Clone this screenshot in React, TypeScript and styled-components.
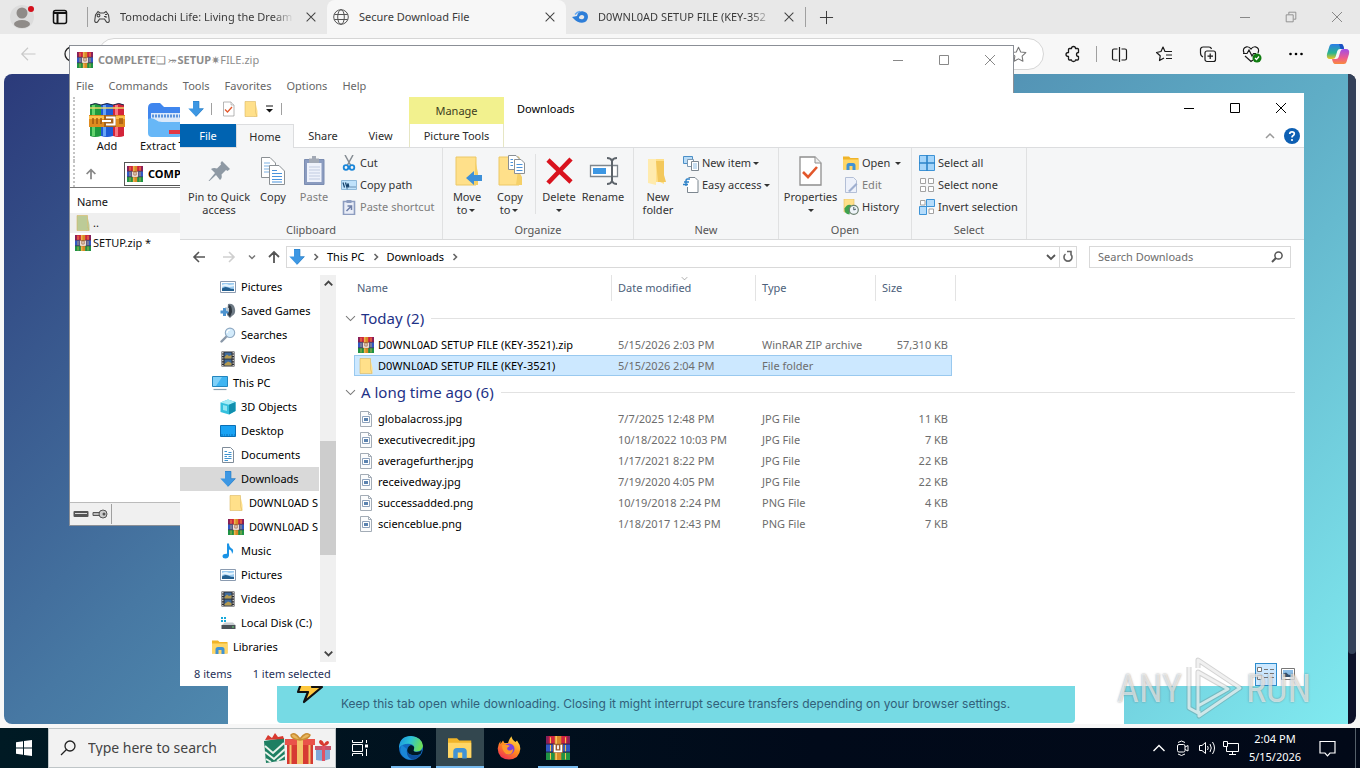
import React from "react";
import styled, { createGlobalStyle, css } from "styled-components";

const GlobalStyle = createGlobalStyle`
  * { box-sizing: border-box; }
  html, body, #root { height: 100%; }
  body {
    margin: 0;
    overflow: hidden;
    font: 11px/16px "Noto Sans", "Open Sans", sans-serif;
    color: #1b1b1b;
    background: #f7f7f7;
  }
  button, input { font: inherit; color: inherit; border: 0; padding: 0; margin: 0; background: none; }
  svg { display: block; flex: none; }
  a { color: inherit; text-decoration: none; }
`;

/* ---------- icons ---------- */

type IconProps = { size?: number; color?: string };

const Stroke = ({
  d,
  size = 16,
  color = "#1b1b1b",
  width = 1,
}: IconProps & { d: string; width?: number }) => (
  <svg width={size} height={size} viewBox="0 0 16 16" fill="none" stroke={color} strokeWidth={width}>
    <path d={d} />
  </svg>
);

const P = {
  close: "M3 3L13 13M13 3L3 13",
  min: "M3 8.5H13",
  max: "M3.5 3.5H12.5V12.5H3.5Z",
  restore: "M2.5 5.5H10.5V13.5H2.5ZM5.5 5V2.5H13.5V10.5H11",
  left: "M14 8H3M8 3L3 8L8 13",
  right: "M2 8H13M8 3L13 8L8 13",
  up: "M8 14V3M3 8L8 3L13 8",
  chevDown: "M4 6L8 10L12 6",
  chevUp: "M4 10L8 6L12 10",
  chevRight: "M6.5 5L9.5 8L6.5 11",
  plus: "M8 1V15M1 8H15",
};

const WinRar = ({ size = 16 }: IconProps) => (
  <svg width={size} height={size} viewBox="0 0 16 16">
    <path d="M0 0H16V5.4H0Z" fill="#cf2340" />
    <path d="M0 5.4H16V10.8H0Z" fill="#3157c4" />
    <path d="M0 10.8H16V16H0Z" fill="#1f9345" />
    <path d="M0 0H1.8V5H0ZM14.2 0H16V5H14.2Z" fill="#86205a" />
    <path d="M0 5.3H16M0 10.7H16" stroke="#2a2350" strokeWidth=".7" />
    <path d="M3 .8V4.8M3 6V10.2M3 11.4V15.6M13 .8V4.8M13 6V10.2M13 11.4V15.6" stroke="#f0c24a" strokeWidth=".7" />
    <path d="M5.8 0H10.2V16H5.8Z" fill="#d98a28" />
    <path d="M6.3 0H7.3V16H6.3Z" fill="#f6c860" />
    <path d="M4.6 5.2H11.4V11.2H4.6Z" fill="#9a5a30" />
    <path d="M5.8 5.8V10.2H10.2V5.8M8 6.2V8.8" stroke="#fff" strokeWidth="1.2" fill="none" />
  </svg>
);

const RarAdd = () => (
  <svg width="36" height="36" viewBox="0 0 36 36">
    <path d="M1 3Q6 0 12 3V34Q6 36 1 34Z" fill="#1f9a3e" />
    <path d="M3 3H6V34H3Z" fill="#63d36c" />
    <path d="M12 3Q18 0 24 3V34Q18 36 12 34Z" fill="#1e5bd6" />
    <path d="M14 3H17V34H14Z" fill="#67a6f6" />
    <path d="M24 3Q30 0 35 3V34Q30 36 24 34Z" fill="#d3243a" />
    <path d="M26 3H29V34H26Z" fill="#f67784" />
    <path d="M1 3Q6 0 12 3M12 3Q18 0 24 3M24 3Q30 0 35 3" stroke="#1d274a" fill="none" />
    <path d="M1 6H35" stroke="#e8d469" strokeWidth="1.4" />
    <path d="M0 13H36V25H0Z" fill="#df8b1f" />
    <path d="M0 14H36V17H0Z" fill="#fbc04d" />
    <path d="M4 16V22M8 16V22M12 16V22M31 16V22M33 16V22" stroke="#9c550e" strokeWidth="1.4" />
    <path d="M15 13H27V25H15Z" fill="#a9641c" />
    <path d="M17 15.5H25.5V22.5H17M13 19H22" fill="none" stroke="#fff" strokeWidth="2.2" />
  </svg>
);

const RarExtract = () => (
  <svg width="36" height="36" viewBox="0 0 36 36">
    <path d="M1 6Q1 1 6 1H13L17 5H32Q35 5 35 9V20H1Z" fill="#3f86ee" />
    <path d="M4 11H34V30H4Z" fill="#dbe9fa" />
    <path d="M5 14H34" stroke="#5b93dc" strokeWidth="3" strokeDasharray="2 1" />
    <path d="M1 17Q5 15 9 18Q11 20 15 20H35V32Q35 35 31 35H5Q1 35 1 31Z" fill="#67b7f7" />
    <path d="M22 28H35V32H22Z" fill="#e23844" />
  </svg>
);

const Folder = ({ size = 16, color = "#ffe08a" }: IconProps) => (
  <svg width={size} height={size} viewBox="0 0 16 16">
    <path d="M2 .5H12.5V15.5H2Z" fill={color} />
    <path d="M12.5 1.5L14.5 10V15.5H11L12.5 11Z" fill={color} />
    <path d="M2 .5H12.5V11L14 15.5H2Z" fill="none" stroke="#d9b45c" strokeOpacity=".8" strokeWidth=".7" />
  </svg>
);

const DownArrow = ({ size = 16 }: IconProps) => (
  <svg width={size} height={size} viewBox="0 0 16 16">
    <path d="M5 0H11V7.5H15.7L8 15.7L.3 7.5H5Z" fill="#3d97e3" />
    <path d="M5 .3H11V7.7H15.3L8 15.4" fill="none" stroke="#2478bf" strokeWidth=".6" />
  </svg>
);

const Picture = () => (
  <svg width="16" height="16" viewBox="0 0 16 16">
    <path d="M.5 2.5H15.5V13.5H.5Z" fill="#fff" stroke="#8b9bb0" />
    <path d="M2 4H14V12H2Z" fill="#9ccbf0" />
    <path d="M2 12V9.5Q5 7 8 8.5Q11 10 14 10V12Z" fill="#235f90" />
    <path d="M2 6Q6 4 9 6L14 5.5V7Q9 9 5 7L2 8Z" fill="#e6f4fd" />
  </svg>
);
const SavedGames = () => (
  <svg width="16" height="16" viewBox="0 0 16 16">
    <path d="M8 1Q14 0 15 6Q16 11 12 13L10 15L7 12Z" fill="#6f7b86" />
    <path d="M9 2Q12 2 12 9L10 14L7 10Z" fill="#2e3740" />
    <path d="M3 5H6V7.5H8.5V10.5H6V13H3V10.5H.5V7.5H3Z" fill="#4d93cf" />
    <path d="M5 4L9 5V9L7 8Z" fill="#b9c4cc" />
  </svg>
);
const SearchGlass = () => (
  <svg width="16" height="16" viewBox="0 0 16 16">
    <path d="M1.5 14.5L6.5 9.5" stroke="#8a98a8" strokeWidth="2.4" strokeLinecap="round" />
    <circle cx="10" cy="5.8" r="4.7" fill="#d3ebfb" stroke="#8fa9c2" strokeWidth="1.1" />
    <path d="M7 6Q7 3 10 3" stroke="#fff" fill="none" strokeWidth="1.2" />
  </svg>
);
const Videos = () => (
  <svg width="16" height="16" viewBox="0 0 16 16">
    <path d="M1.5 .5H14.5V15.5H1.5Z" fill="#2d2d30" />
    <path d="M2.8 1V15M13.2 1V15" stroke="#e8e8e8" strokeWidth="1.2" strokeDasharray="1.4 1.2" />
    <path d="M4.5 1.5H11.5V7.5H4.5ZM4.5 8.5H11.5V14.5H4.5Z" fill="#3d6a9e" />
    <path d="M4.5 6L7 3.5L9 5L11.5 4V7.5H4.5ZM4.5 13L8 10.5L11.5 12V14.5H4.5Z" fill="#b59a4e" />
  </svg>
);
const ThisPC = () => (
  <svg width="16" height="16" viewBox="0 0 16 16">
    <path d="M.5 1.5H15.5V11.5H.5Z" fill="#3fb5f2" stroke="#2385bd" />
    <path d="M1 2H10L4 11H1Z" fill="#7fd0f8" />
    <path d="M1.5 14.5H14.5" stroke="#8aa1b1" strokeWidth="1.2" />
  </svg>
);
const Cube = () => (
  <svg width="16" height="16" viewBox="0 0 16 16">
    <path d="M8 .5L15.5 3V12L9 15.5L.5 13V3.5Z" fill="#35c0dd" />
    <path d="M.5 3.5L8 .5L15.5 3L9 5.8Z" fill="#a6ecf6" />
    <path d="M9 5.8L15.5 3V12L9 15.5Z" fill="#118fae" />
    <path d="M3 6L7 7V12L3 11Z" fill="#90e6f3" />
  </svg>
);
const Desk = () => (
  <svg width="16" height="16" viewBox="0 0 16 16">
    <path d="M.5 2.5H15.5V13.5H.5Z" fill="#1aa3f4" stroke="#0a6fb5" />
    <path d="M1 12H15" stroke="#0a6fb5" strokeDasharray="2 1 1 1" />
  </svg>
);
const Doc = () => (
  <svg width="16" height="16" viewBox="0 0 16 16">
    <path d="M2.5 .5H10.5L13.5 3.5V15.5H2.5Z" fill="#fff" stroke="#7f8c99" />
    <path d="M4.5 4.5H7M8.5 5.5H11.5M4.5 7.5H11.5M4.5 9.5H7M8.5 9.5H11.5M4.5 11.5H11.5M4.5 13.5H8" stroke="#3f93cf" />
  </svg>
);
const Music = () => (
  <svg width="16" height="16" viewBox="0 0 16 16">
    <path d="M7 .5H9Q9 4 12.5 6Q14 8 12 11Q12 7 9 6.5V12.5Q8.5 15.5 5.5 15.5Q2.5 15.5 2.5 13Q3 10.5 7 10.7Z" fill="#1a93e6" />
  </svg>
);
const Disk = () => (
  <svg width="16" height="16" viewBox="0 0 16 16">
    <path d="M1 2H3V4H1ZM4 2H6V4H4ZM1 5H3V7H1ZM4 5H6V7H4Z" fill="#16a9d9" />
    <path d="M3 9L5 7.5H13L15.5 10H2Z" fill="#c6cbd0" />
    <path d="M1.5 10H15.5V14H1.5Z" fill="#4b5258" />
    <path d="M12 12H14" stroke="#6bdc74" />
  </svg>
);
const Libraries = ({ size = 16 }: IconProps) => (
  <svg width={size} height={size} viewBox="0 0 16 16">
    <path d="M0 1.5H6L7.5 3H15.5V14.5H0Z" fill="#f0b429" />
    <path d="M0 4.5H15.5V14.5H0Z" fill="#ffd666" />
    <path d="M3.5 15V10.5Q3.5 8 6 8H10Q12.5 8 12.5 10.5V15H9.5V11H6.5V15Z" fill="#4092d4" />
  </svg>
);
const ImageFile = () => (
  <svg width="16" height="16" viewBox="0 0 16 16">
    <path d="M2.5 .5H10.5L13.5 3.5V15.5H2.5Z" fill="#fbfcfd" stroke="#a3acb6" />
    <path d="M10.5 .5V3.5H13.5" fill="none" stroke="#a3acb6" />
    <path d="M4.5 5.5H11.5V11.5H4.5Z" fill="#fff" stroke="#8ea3bd" />
    <path d="M6 7H10V10H6Z" fill="#5b83b0" />
  </svg>
);
const CheckDoc = ({ size = 16 }: IconProps) => (
  <svg width={size} height={size} viewBox="0 0 32 32">
    <path d="M5 2H20L26 8V30H5Z" fill="#fff" stroke="#8f8f8f" strokeWidth="1.3" />
    <path d="M20 2V8H26" fill="#eee" stroke="#8f8f8f" />
    <path d="M8 17L13 22L22 12" fill="none" stroke="#e2572b" strokeWidth="2.6" />
  </svg>
);
const Pin = () => (
  <svg width="32" height="32" viewBox="0 0 32 32">
    <path d="M19 6L27 14L24.5 16L23 15L18.5 19.5Q19.5 23 17 25L13 20L6.5 26L5.5 26L12 18L8 14Q10.5 12.5 14 13.5L18 9.5L17.5 8Z" fill="#8e99a4" />
  </svg>
);
const CopyPages = () => (
  <svg width="32" height="32" viewBox="0 0 32 32">
    <path d="M4.5 2.5H13L18.5 8V22.5H4.5Z" fill="#fff" stroke="#8b9094" />
    <path d="M7 8H13M7 11H16M7 14H16M7 17H16" stroke="#7db1e3" />
    <path d="M12.5 10.5H22L27.5 16V29.5H12.5Z" fill="#fff" stroke="#8b9094" />
    <path d="M15 15.5H20M15 18.5H25M15 21.5H25M15 24.5H25M15 27H25" stroke="#4b93db" strokeWidth="1.2" />
  </svg>
);
const PasteBig = () => (
  <svg width="32" height="32" viewBox="0 0 32 32">
    <path d="M6.5 4.5H26V29.5H6.5Z" fill="#8b9cc0" stroke="#7a8cb1" />
    <path d="M9 8H23.5V27H9Z" fill="#eef2fb" />
    <path d="M11 3.5H21V8H11ZM14 1H18V4H14Z" fill="#a2a9b5" />
    <path d="M11 12H22M11 15H22M11 18H22M11 21H22M11 24H22" stroke="#c1cbe0" />
  </svg>
);
const Scissors = () => (
  <svg width="16" height="16" viewBox="0 0 16 16">
    <path d="M4 0L9.5 10M12 0L6.5 10" stroke="#858c93" strokeWidth="1.5" />
    <circle cx="5" cy="12.5" r="2.3" fill="none" stroke="#1a86d9" strokeWidth="1.8" />
    <circle cx="11" cy="12.5" r="2.3" fill="none" stroke="#1a86d9" strokeWidth="1.8" />
  </svg>
);
const CopyPath = () => (
  <svg width="16" height="16" viewBox="0 0 16 16">
    <path d="M.5 3.5H15.5V12.5H.5Z" fill="#bfe2fb" stroke="#8fb9d9" />
    <path d="M2 5.5L3.5 10.5M4.5 5.5L6 10.5L7 6.5L8 10.5M9.5 10H10.5M11.5 10H12.5M13.5 10H14.5" stroke="#14416b" fill="none" strokeWidth="1.2" />
  </svg>
);
const PasteShortcut = () => (
  <svg width="16" height="16" viewBox="0 0 16 16">
    <path d="M2.5 2.5H13.5V15.5H2.5Z" fill="#e9edf7" stroke="#8d9dc0" strokeWidth="1.6" />
    <path d="M5.5 1H10.5V4H5.5Z" fill="#8d9dc0" />
    <path d="M5.5 12L10 7.5M6.5 7H10.5V11" stroke="#6e7fa8" fill="none" strokeWidth="1.5" />
  </svg>
);
const MoveTo = () => (
  <svg width="32" height="32" viewBox="0 0 32 32">
    <path d="M5 2H25V30H5Z" fill="#ffe08a" stroke="#ecc867" />
    <path d="M24 4L27 18V30H22L24 24Z" fill="#f5d068" />
    <path d="M31 20V26H23V30L15 23L23 16V20Z" fill="#3d90d8" />
  </svg>
);
const CopyTo = () => (
  <svg width="32" height="32" viewBox="0 0 32 32">
    <path d="M5 2H25V30H5Z" fill="#ffe08a" stroke="#ecc867" />
    <path d="M24 15L28 22V30H22Z" fill="#f5d068" />
    <path d="M14.5 .5H22L25.5 4V14.5H14.5Z" fill="#fff" stroke="#8b9094" />
    <path d="M20.5 4.5H27L30.5 8V18.5H20.5Z" fill="#fff" stroke="#8b9094" />
    <path d="M16.5 4.5H19M16.5 7.5H19M16.5 10.5H19M22.5 9.5H28.5M22.5 12.5H28.5M22.5 15.5H28.5" stroke="#4b93db" />
  </svg>
);
const DeleteX = () => (
  <svg width="32" height="32" viewBox="0 0 32 32">
    <path d="M5 5L28 27M28 4L5 28" stroke="#d9131e" strokeWidth="4.6" />
  </svg>
);
const RenameIcon = () => (
  <svg width="32" height="32" viewBox="0 0 32 32">
    <path d="M3.5 10.5H30.5V21.5H3.5Z" fill="#fff" stroke="#7d858c" strokeWidth="1.3" />
    <path d="M6 13H19V19H6Z" fill="#3d97e3" />
    <path d="M20 3Q24 3 25 6Q26 3 30 3M25 5V27M20 29Q24 29 25 26Q26 29 30 29" fill="none" stroke="#5d646b" strokeWidth="2" />
  </svg>
);
const NewFolder = () => (
  <svg width="32" height="32" viewBox="0 0 32 32">
    <path d="M6 4H22V29L18 27H6Z" fill="#ffe08a" />
    <path d="M14 6H22V20L24 27H16Z" fill="#f3c85c" />
    <path d="M6 4H14V30L6 28Z" fill="#ffebae" />
  </svg>
);
const NewItem = () => (
  <svg width="16" height="16" viewBox="0 0 16 16">
    <path d="M.5 1.5H9.5V8.5H.5Z" fill="#b9dcf7" stroke="#4b8fc7" />
    <path d="M4.5 4.5H10.5V11.5H4.5Z" fill="#fff" stroke="#7d98b0" />
    <path d="M8.5 6.5H15.5V15.5H8.5Z" fill="#fff" stroke="#7d8790" />
    <path d="M10 9H14M10 11H14M10 13H14" stroke="#8fbbe0" />
  </svg>
);
const EasyAccess = () => (
  <svg width="16" height="16" viewBox="0 0 16 16">
    <path d="M5.5 .5H12L15 3.5V15.5H4.5V10" fill="#fff" stroke="#7d8790" />
    <path d="M0 7.5H5M7 2H4.5Q3 2 3 4V9M1 5H6" fill="none" stroke="#2e82c8" strokeWidth="1.4" />
  </svg>
);
const EditIcon = () => (
  <svg width="16" height="16" viewBox="0 0 16 16">
    <path d="M2.5 .5H10.5L13.5 3.5V15.5H2.5Z" fill="#edf1fa" stroke="#b3bfd6" />
    <path d="M5 14L13 6L14.5 7.5L7 15Z" fill="#9fafcf" />
  </svg>
);
const HistoryIcon = () => (
  <svg width="16" height="16" viewBox="0 0 16 16">
    <path d="M1 0H11V13H1Z" fill="#ffe08a" stroke="#e5c15c" strokeWidth=".6" />
    <path d="M1.5 9.5Q4 4.5 8 6L6.5 15.5Q1 15 1.5 9.5Z" fill="#3fa24e" />
    <circle cx="10.8" cy="10.8" r="4.5" fill="#eef4f8" stroke="#6a8070" strokeWidth="1.2" />
    <path d="M10.8 8V11L13 10" fill="none" stroke="#4a5a66" />
  </svg>
);
const SelectAll = () => (
  <svg width="16" height="16" viewBox="0 0 16 16">
    <path d="M.5 .5H15.5V15.5H.5Z" fill="#a5d5fa" stroke="#3d93d6" />
    <path d="M8 0V16M0 8H16" stroke="#2d84c9" strokeWidth="1.6" />
  </svg>
);
const SelectNone = () => (
  <svg width="16" height="16" viewBox="0 0 16 16">
    <path d="M1.5 1.5H6.5V6.5H1.5ZM9.5 1.5H14.5V6.5H9.5ZM1.5 9.5H6.5V14.5H1.5ZM9.5 9.5H14.5V14.5H9.5Z" fill="#fff" stroke="#a2a2a2" />
  </svg>
);
const Invert = () => (
  <svg width="16" height="16" viewBox="0 0 16 16">
    <path d="M1.5 1.5H6V6H1.5ZM10 10H14.5V14.5H10Z" fill="#fff" stroke="#a2a2a2" />
    <path d="M7.5 .5H15.5V7.5H7.5ZM.5 7.5H7.5V15.5H.5Z" fill="#b5dcfb" stroke="#3d93d6" />
  </svg>
);
const Help = () => (
  <svg width="16" height="16" viewBox="0 0 16 16">
    <circle cx="8" cy="8" r="8" fill="#0d5fb3" />
    <path d="M5.7 6Q5.8 3.8 8 3.8Q10.3 3.8 10.3 5.8Q10.3 7 8.9 7.8Q8 8.4 8 9.6" fill="none" stroke="#fff" strokeWidth="1.7" />
    <circle cx="8" cy="12" r="1.1" fill="#fff" />
  </svg>
);

/* ---------- desktop ---------- */

const Desktop = styled.div`
  position: relative;
  display: flex;
  flex-direction: column;
  height: 100vh;
  overflow: hidden;
`;
const Spacer = styled.span<{ $w?: number }>`
  flex: ${(p) => (p.$w === undefined ? "1" : `0 0 ${p.$w}px`)};
`;

/* ---------- browser ---------- */

const Browser = styled.main`
  flex: 1;
  min-height: 0;
  display: flex;
  flex-direction: column;
  background: #f7f7f7;
`;
const TabStrip = styled.div`
  display: flex;
  align-items: stretch;
  height: 34px;
  background: #e8e8e8;
`;
const StripButton = styled.button<{ $w: number }>`
  display: grid;
  place-items: center;
  flex: none;
  width: ${(p) => p.$w}px;
`;
const Divider = styled.span<{ $h: number }>`
  align-self: center;
  width: 1px;
  height: ${(p) => p.$h}px;
  background: #a0a0a0;
`;
const Tab = styled.div<{ $active?: boolean }>`
  display: flex;
  align-items: center;
  gap: 10px;
  flex: 0 1 239px;
  min-width: 0;
  padding: 0 9px 0 6px;
  color: #3b3b3b;
  ${(p) => p.$active && css`background: #f7f7f7; border-radius: 8px 8px 0 0;`}
`;
const TabTitle = styled.span<{ $fade?: boolean }>`
  flex: 1;
  overflow: hidden;
  white-space: nowrap;
  ${(p) => p.$fade && css`mask-image: linear-gradient(90deg, #000 88%, transparent);`}
`;
const Toolbar = styled.div`
  display: flex;
  align-items: center;
  height: 40px;
  padding-right: 2px;
`;
const UrlBox = styled.div`
  display: flex;
  align-items: center;
  justify-content: flex-end;
  flex: 1;
  height: 32px;
  margin: 0 7px 0 10px;
  padding-right: 16px;
  background: #fff;
  border: 1px solid #d6d6d6;
  border-radius: 16px;
`;
const PageFrame = styled.div`
  flex: 1;
  min-height: 0;
  display: flex;
  margin: 0 4px 4px;
  border-radius: 8px;
  overflow: hidden;
`;
const Page = styled.div`
  flex: 1;
  display: flex;
  justify-content: center;
  background: linear-gradient(135deg, #2b3a7a 0%, #4778a3 33%, #5fadc6 67%, #80eaf0 100%);
`;
const Card = styled.section`
  display: flex;
  flex-direction: column;
  justify-content: flex-end;
  width: 100%;
  max-width: 896px;
  margin-top: 64px;
  padding: 0 49px 1px;
  background: #fff;
`;
const Notice = styled.div`
  display: flex;
  gap: 16px;
  height: 80px;
  padding: 32px 16px 0;
  background: #76dae4;
  border-radius: 4px;
`;
const NoticeText = styled.p`
  margin: 20px 0 0;
  font: 12px/18px Inter, sans-serif;
  color: #31607a;
  white-space: nowrap;
`;
const PageScroll = styled.div`
  width: 8px;
  padding-bottom: 70px;
  background: #0c1028;
`;
const PageThumb = styled.div`
  height: 100%;
  background: #334058;
  border-radius: 0 0 4px 4px;
`;

const CloseTab = () => (
  <button aria-label="Close tab"><Stroke d={P.close} size={14} color="#444" width={1.2} /></button>
);

const BrowserWindow = () => (
  <Browser>
    <TabStrip>
      <StripButton $w={44} aria-label="Profile">
        <svg width="26" height="28" viewBox="0 0 26 28">
          <circle cx="13" cy="14" r="12" fill="#dcdcdc" />
          <circle cx="13" cy="10" r="5.5" fill="#8f8b88" />
          <ellipse cx="13" cy="21" rx="8" ry="4" fill="#8f8b88" />
          <circle cx="22" cy="6" r="3" fill="#d4101c" />
        </svg>
      </StripButton>
      <StripButton $w={32} aria-label="Tab actions">
        <svg width="16" height="16" viewBox="0 0 16 16" fill="none" stroke="#111" strokeWidth="1.5">
          <rect x="1.5" y="1.5" width="13" height="13" rx="2" />
          <path d="M1.5 4H14.5M5.5 4V14" strokeWidth="2" />
        </svg>
      </StripButton>
      <Spacer $w={11} />
      <Divider $h={20} />
      <Tab>
        <svg width="16" height="16" viewBox="0 0 16 16" fill="none" stroke="#444" strokeWidth="1.1">
          <path d="M4 2.5L1.5 6L.7 12Q1.5 14.5 3.5 13L5.5 10H10.5L12.5 13Q14.5 14.5 15.3 12L14.5 6L12 2.5L10 4H6Z" />
          <circle cx="4.5" cy="6.5" r="1.4" />
          <path d="M10 7.5H11.5M11 5.5H13M12 7V9" />
        </svg>
        <TabTitle $fade>Tomodachi Life: Living the Dream</TabTitle>
        <CloseTab />
      </Tab>
      <Tab $active>
        <svg width="16" height="16" viewBox="0 0 16 16" fill="none" stroke="#555">
          <circle cx="8" cy="8" r="7.3" />
          <ellipse cx="8" cy="8" rx="3.3" ry="7.3" />
          <path d="M1.3 5.5H14.7M1.3 10.5H14.7" />
        </svg>
        <TabTitle>Secure Download File</TabTitle>
        <CloseTab />
      </Tab>
      <Tab>
        <svg width="16" height="16" viewBox="0 0 16 16">
          <path fillRule="evenodd" d="M0 8L5 7Q6 2 10.5 2.2Q16 3 16 8Q15.5 13.5 10 13.8Q5 13.5 2.5 10.5L0 8ZM7 9.2Q8.5 10.5 10.5 10.2Q12.5 9.5 12.3 7.8Q11.8 6 9.8 6.1Q8 6.3 7 8Z" fill="#2e7ed8" />
          <path d="M3 5.5Q5 3 8 2.5" stroke="#64a6f0" strokeWidth="1.3" fill="none" />
        </svg>
        <TabTitle $fade>D0WNL0AD SETUP FILE (KEY-352</TabTitle>
        <CloseTab />
      </Tab>
      <Divider $h={20} />
      <StripButton $w={41} aria-label="New tab"><Stroke d={P.plus} size={15} color="#333" /></StripButton>
      <Spacer />
      <StripButton $w={46} aria-label="Minimize"><Stroke d={P.min} color="#888" /></StripButton>
      <StripButton $w={46} aria-label="Restore"><Stroke d={P.restore} size={14} color="#888" /></StripButton>
      <StripButton $w={46} aria-label="Close"><Stroke d={P.close} color="#888" /></StripButton>
    </TabStrip>
    <Toolbar>
      <StripButton $w={56} aria-label="Back"><Stroke d={P.left} size={20} color="#c8c8c8" width={0.9} /></StripButton>
      <StripButton $w={32} aria-label="Refresh">
        <svg width="20" height="20" viewBox="0 0 20 20" fill="none" stroke="#222" strokeWidth="1.3"><circle cx="10" cy="10" r="7" /></svg>
      </StripButton>
      <UrlBox>
        <svg width="17" height="17" viewBox="0 0 16 16" fill="none" stroke="#777" strokeLinejoin="round">
          <path d="M8 1.2L10.1 5.6L14.9 6.2L11.4 9.6L12.2 14.4L8 12.1L3.8 14.4L4.6 9.6L1.1 6.2L5.9 5.6Z" />
        </svg>
      </UrlBox>
      <StripButton $w={44} aria-label="Extensions">
        <svg width="18" height="18" viewBox="0 0 18 18" fill="none" stroke="#1b1b1b" strokeWidth="1.3" strokeLinejoin="round">
          <path d="M5.5 3.5H7.5Q7.5 1.5 9.5 1.5T11.5 3.5H13.5Q14.5 3.5 14.5 4.5V7.5Q12.5 7.5 12.5 9.5T14.5 11.5V14Q14.5 15 13.5 15H11.5Q11.5 16.5 9.5 16.5T7.5 15H5.5Q4.5 15 4.5 14V11.5Q2 11.5 2 9.5T4.5 7.5V4.5Q4.5 3.5 5.5 3.5Z" />
        </svg>
      </StripButton>
      <Spacer $w={1} />
      <Divider $h={16} />
      <StripButton $w={45} aria-label="Split screen">
        <svg width="17" height="17" viewBox="0 0 17 17" fill="none" stroke="#1b1b1b" strokeWidth="1.2">
          <path d="M6.5 3H3Q1.5 3 1.5 4.5V12.5Q1.5 14 3 14H6.5M10.5 3H14Q15.5 3 15.5 4.5V12.5Q15.5 14 14 14H10.5M8.5 1V16" />
        </svg>
      </StripButton>
      <StripButton $w={44} aria-label="Favorites">
        <svg width="18" height="18" viewBox="0 0 18 18" fill="none" stroke="#1b1b1b" strokeWidth="1.2" strokeLinejoin="round">
          <path d="M9 13L4.5 15.5L5.2 10.8L1.5 7.5L6 6.5L8 2L10 6.5H17M11 10H17M11 13.5H17" />
        </svg>
      </StripButton>
      <StripButton $w={44} aria-label="Collections">
        <svg width="18" height="18" viewBox="0 0 18 18" fill="none" stroke="#1b1b1b" strokeWidth="1.2">
          <path d="M4 12Q1.5 11 1.5 8V4Q2 2 4 2H10Q12 2 12.5 4" />
          <rect x="6" y="6" width="10.5" height="10.5" rx="2" />
          <path d="M11.2 8.5V14M8.5 11.2H14" />
        </svg>
      </StripButton>
      <StripButton $w={44} aria-label="Browser essentials">
        <svg width="20" height="18" viewBox="0 0 20 18" fill="none" stroke="#1b1b1b" strokeWidth="1.2">
          <path d="M2 8Q0 3 4.5 1.8Q7.5 1.5 9 4Q10.5 1.5 13.5 1.8Q18 3 16 8M3 11L9 16.5L11 15M1 8.5H5L7 5L10 11L11.5 8.5H14" />
          <circle cx="15" cy="13" r="4.5" fill="#107c10" stroke="none" />
          <path d="M13 13L14.5 14.5L17 11.5" stroke="#fff" />
        </svg>
      </StripButton>
      <StripButton $w={44} aria-label="Settings and more">
        <svg width="16" height="16" viewBox="0 0 16 16"><circle cx="2.5" cy="8" r="1.3" /><circle cx="8" cy="8" r="1.3" /><circle cx="13.5" cy="8" r="1.3" /></svg>
      </StripButton>
      <StripButton $w={40} aria-label="Copilot">
        <svg width="24" height="22" viewBox="0 0 24 22">
          <defs>
            <linearGradient id="cpA" x1="0" y1="0" x2="0" y2="1"><stop offset="0" stopColor="#2b7de9" /><stop offset=".6" stopColor="#29b58f" /><stop offset="1" stopColor="#f2c51d" /></linearGradient>
            <linearGradient id="cpB" x1="0" y1="0" x2="0" y2="1"><stop offset="0" stopColor="#a04ce8" /><stop offset=".6" stopColor="#ee5b8f" /><stop offset="1" stopColor="#f98a3c" /></linearGradient>
          </defs>
          <path d="M6 1H15Q17 1 18 6H14Q12 6 11.3 8L9.5 14Q9 16 6 16H4Q0 16 1 11L3.5 3Q4 1 6 1Z" fill="url(#cpA)" />
          <path d="M18 21H9Q7 21 6 16H10Q12 16 12.7 14L14.5 8Q15 6 18 6H20Q24 6 23 11L20.5 19Q20 21 18 21Z" fill="url(#cpB)" />
          <path d="M13 1H15.5Q17.5 1 18 6H14.5Z" fill="#1a52c4" />
        </svg>
      </StripButton>
    </Toolbar>
    <PageFrame>
      <Page>
        <Card>
          <Notice>
            <svg width="32" height="32" viewBox="0 0 32 32">
              <path d="M10 3H26L19 12H29L11 27L15 17H5Z" fill="#ffc83d" stroke="#111" strokeWidth="2.2" strokeLinejoin="round" />
            </svg>
            <NoticeText>
              Keep this tab open while downloading. Closing it might interrupt secure transfers depending on your browser settings.
            </NoticeText>
          </Notice>
        </Card>
      </Page>
      <PageScroll><PageThumb /></PageScroll>
    </PageFrame>
  </Browser>
);

/* ---------- archive window ---------- */

const Window = styled.section<{ $top: number; $left: number; $right: number; $bottom: number }>`
  position: absolute;
  top: ${(p) => p.$top}px;
  left: ${(p) => p.$left}px;
  right: ${(p) => p.$right}px;
  bottom: ${(p) => p.$bottom}px;
  display: flex;
  flex-direction: column;
  overflow: hidden;
  background: #fff;
`;
const RarWindow = styled(Window)`
  border: 1px solid #8b8f96;
  color: #666;
`;
const RarTitle = styled.header`
  display: flex;
  align-items: center;
  height: 28px;
  padding-left: 7px;
  gap: 5px;
  color: #8c8c8c;
  white-space: nowrap;
`;
const WinControls = styled.div`
  display: flex;
  margin-left: auto;
  height: 30px;
`;
const MenuBar = styled.nav`
  display: flex;
  align-items: center;
  gap: 15px;
  height: 23px;
  padding-left: 6px;
`;
const RarTools = styled.div`
  display: flex;
  height: 64px;
  margin-left: 3px;
  padding: 5px 0 0 11px;
  gap: 12px;
  border-left: 2px dotted #c4c4c4;
  color: #111;
`;
const RarTool = styled.button`
  display: flex;
  flex-direction: column;
  align-items: center;
  min-width: 42px;
  white-space: nowrap;
`;
const RarPath = styled.div`
  display: flex;
  align-items: center;
  height: 26px;
  margin-left: 3px;
  padding-left: 9px;
  border-left: 2px dotted #c4c4c4;
`;
const PathBox = styled.div`
  display: flex;
  align-items: center;
  gap: 5px;
  flex: 1;
  height: 24px;
  margin-left: 8px;
  padding-left: 2px;
  border: 1px solid #555;
  font-weight: bold;
  color: #000;
`;
const RarList = styled.div`
  flex: 1;
  border-top: 1px solid #777;
  padding-top: 2px;
  color: #111;
`;
const RarRow = styled.div<{ $shade?: boolean; $head?: boolean }>`
  display: flex;
  align-items: center;
  gap: 2px;
  height: ${(p) => (p.$head ? 23 : 20)}px;
  padding-left: ${(p) => (p.$head ? 7 : 5)}px;
  background: ${(p) => (p.$shade ? "#efefef" : "#fff")};
`;
const RarStatus = styled.footer`
  display: flex;
  align-items: center;
  gap: 3px;
  height: 23px;
  padding-left: 3px;
  background: #f0f0f0;
  border-top: 1px solid #bbb;
`;

const ArchiveWindow = () => (
  <RarWindow $top={45} $left={69} $right={346} $bottom={242}>
    <RarTitle>
      <WinRar />
      <span><b>COMPLETE</b>❏ ⤖<b>SETUP</b>✷FILE.zip</span>
      <WinControls>
        <StripButton $w={46} aria-label="Minimize"><Stroke d={P.min} color="#888" /></StripButton>
        <StripButton $w={46} aria-label="Maximize"><Stroke d={P.max} color="#888" /></StripButton>
        <StripButton $w={46} aria-label="Close"><Stroke d={P.close} color="#888" /></StripButton>
      </WinControls>
    </RarTitle>
    <MenuBar>
      {["File", "Commands", "Tools", "Favorites", "Options", "Help"].map((m) => <button key={m}>{m}</button>)}
    </MenuBar>
    <RarTools>
      <RarTool><RarAdd />Add</RarTool>
      <RarTool><RarExtract />Extract To</RarTool>
    </RarTools>
    <RarPath>
      <button aria-label="Up one level"><Stroke d={P.up} size={14} color="#888" width={2} /></button>
      <Spacer $w={18} />
      <PathBox><WinRar />COMPLETE</PathBox>
    </RarPath>
    <RarList>
      <RarRow $head>Name</RarRow>
      <RarRow $shade><Folder color="#bccb97" />..</RarRow>
      <RarRow><WinRar />SETUP.zip *</RarRow>
    </RarList>
    <RarStatus>
      <svg width="16" height="8" viewBox="0 0 16 8"><rect x=".5" y="1" width="15" height="6" rx="1" fill="#555" /><path d="M2 3.5H14" stroke="#ddd" /></svg>
      <svg width="16" height="10" viewBox="0 0 16 10"><path d="M1 3.5H9V6.5H1Z" fill="#bbb" stroke="#555" /><circle cx="11" cy="5" r="4" fill="#ccc" stroke="#555" /><circle cx="12" cy="5" r="1.5" fill="#555" /></svg>
      <Divider $h={20} />
    </RarStatus>
  </RarWindow>
);

/* ---------- explorer window ---------- */

const TopBar = styled.header`
  display: flex;
  align-items: stretch;
  height: 31px;
`;
const QuickAccess = styled.div`
  display: flex;
  align-items: center;
  gap: 7px;
  width: 229px;
  padding-left: 8px;
`;
const QuickTools = styled.div`
  display: flex;
  align-items: center;
  gap: 6px;
  padding-left: 2px;
`;
const ContextTab = styled.span`
  display: grid;
  place-items: center;
  align-self: flex-end;
  width: 95px;
  height: 27px;
  background: #f2f18e;
  color: #3d3d20;
`;
const WinTitle = styled.h1`
  margin: 0 0 0 13px;
  font-size: 11px;
  font-weight: normal;
  line-height: 31px;
  color: #000;
`;
const RibbonTabs = styled.nav`
  display: flex;
  height: 24px;
  border-bottom: 1px solid #dcdddf;
`;
const RibbonTab = styled.button<{ $w: number; $kind?: "file" | "active" | "context" }>`
  width: ${(p) => p.$w}px;
  color: #2b2b2b;
  ${(p) => p.$kind === "file" && css`background: #0063b1; color: #fff;`}
  ${(p) => p.$kind === "active" && css`
    margin-bottom: -1px;
    background: #f5f6f7;
    border: 1px solid #dcdddf;
    border-bottom: 0;
  `}
  ${(p) => p.$kind === "context" && css`
    border: solid #e6e6c4;
    border-width: 0 1px;
  `}
`;
const RibbonEnd = styled.div`
  display: flex;
  align-items: center;
  gap: 6px;
  margin-left: auto;
  padding-right: 4px;
`;
const Ribbon = styled.div`
  display: flex;
  height: 92px;
  background: #f5f6f7;
  border-bottom: 1px solid #d9dadb;
`;
const Group = styled.section<{ $w: number }>`
  display: flex;
  flex-direction: column;
  justify-content: space-between;
  width: ${(p) => p.$w}px;
  padding: 4px 3px 0;
  border-right: 1px solid #e0e1e2;
`;
const GroupBody = styled.div`
  display: flex;
`;
const GroupLabel = styled.span`
  text-align: center;
  line-height: 18px;
  color: #555;
`;
const Big = styled.button<{ $w: number; $off?: boolean }>`
  display: flex;
  flex-direction: column;
  align-items: center;
  flex: none;
  width: ${(p) => p.$w}px;
  padding-top: 3px;
  line-height: 13px;
  color: ${(p) => (p.$off ? "#7d7d7d" : "#333")};
`;
const BigLabel = styled.span`
  padding-top: 3px;
  white-space: pre;
`;
const SmallCol = styled.div`
  display: flex;
  flex-direction: column;
  padding-left: 4px;
`;
const Small = styled.button<{ $off?: boolean }>`
  display: flex;
  align-items: center;
  gap: 3px;
  height: 22px;
  white-space: nowrap;
  color: ${(p) => (p.$off ? "#7d7d7d" : "#333")};
`;
const Caret = styled.span`
  display: inline-block;
  margin: 0 2px 2px;
  border: 3px solid transparent;
  border-top-color: #333;
  border-bottom: 0;
`;
const GroupRule = styled.span`
  width: 1px;
  height: 60px;
  margin: 2px 3px 0;
  background: #e0e1e2;
`;

const AddressRow = styled.div`
  display: flex;
  align-items: center;
  height: 34px;
  padding: 0 13px 0 7px;
`;
const NavButton = styled.button<{ $w?: number }>`
  display: grid;
  place-items: center;
  width: ${(p) => p.$w ?? 24}px;
`;
const Crumbs = styled.div`
  display: flex;
  align-items: center;
  flex: 1;
  height: 22px;
  padding-left: 2px;
  border: 1px solid #d9d9d9;
  margin: 0 12px 0 1px;
`;
const CrumbList = styled.nav`
  display: flex;
  align-items: center;
  flex: 1;
  gap: 3px;
  color: #000;
`;
const Refresh = styled.button`
  display: grid;
  place-items: center;
  width: 17px;
  height: 20px;
  border-left: 1px solid #d9d9d9;
`;
const SearchBox = styled.label`
  display: flex;
  align-items: center;
  width: 202px;
  height: 22px;
  padding: 0 6px 0 8px;
  border: 1px solid #d9d9d9;
  input {
    flex: 1;
    min-width: 0;
    outline: 0;
  }
  input::placeholder { color: #6d6d6d; opacity: 1; }
`;

const Body = styled.div`
  display: flex;
  flex: 1;
  min-height: 0;
`;
const TreePane = styled.nav`
  display: flex;
  width: 156px;
  padding-top: 1px;
`;
const TreeList = styled.ul`
  flex: 1;
  min-width: 0;
  margin: 0;
  padding: 0;
  list-style: none;
  overflow: hidden;
`;
const TreeItem = styled.li<{ $level: number; $on?: boolean }>`
  height: 24px;
  margin-right: 1px;
  padding-left: ${(p) => 24 + p.$level * 8}px;
  background: ${(p) => (p.$on ? "#d9d9d9" : "transparent")};
  a {
    display: flex;
    align-items: center;
    gap: 5px;
    height: 24px;
    white-space: nowrap;
    color: #000;
  }
`;
const Scroll = styled.div`
  display: flex;
  flex-direction: column;
  width: 16px;
  background: #f0f0f0;
`;
const ScrollButton = styled.button`
  display: grid;
  place-items: center;
  height: 17px;
`;
const Track = styled.div`
  flex: 1;
  display: flex;
  flex-direction: column;
`;
const Before = styled.div`
  flex: 149;
`;
const Thumb = styled.div`
  flex: 113;
  background: #cdcdcd;
`;
const After = styled.div`
  flex: 90;
`;

const FilePane = styled.div`
  flex: 1;
  padding: 1px 9px 0 7px;
`;
const Files = styled.table`
  width: 100%;
  table-layout: fixed;
  border-collapse: collapse;
  th, td { padding: 0; font-weight: normal; text-align: left; white-space: nowrap; }
`;
const HeadCell = styled.th<{ $first?: boolean; $sorted?: boolean; $bare?: boolean }>`
  height: 27px;
  vertical-align: top;
  color: #4c607a;
  span {
    display: block;
    line-height: 26px;
    padding-left: ${(p) => (p.$first ? 3 : 6)}px;
    border-right: ${(p) => (p.$bare ? 0 : 1)}px solid #e3e3e3;
  }
  ${(p) => p.$sorted && css`
    position: relative;
    svg { position: absolute; top: -2px; left: 50%; margin-left: -5px; }
  `}
`;
const EndCell = styled.th`
  vertical-align: top;
  span { display: block; width: 4px; height: 26px; border-right: 1px solid #e3e3e3; }
`;
const GroupCell = styled.td`
  height: 32px;
`;
const GroupHead = styled.div`
  display: flex;
  align-items: center;
  gap: 4px;
  font-size: 15px;
  line-height: 20px;
  color: #1e3287;
  svg { margin-left: 1px; }
  &::after { content: ""; flex: 1; height: 1px; margin-left: 3px; background: #e2e2e2; }
`;
const Row = styled.tr<{ $on?: boolean }>`
  height: 21px;
  color: #6d6d6d;
  ${(p) => p.$on && css`
    td:not(:first-child):not(:last-child) { background: #cce8ff; box-shadow: inset 0 1px #99c9ef, inset 0 -1px #99c9ef; }
    && td:nth-child(2) { box-shadow: inset 1px 1px #99c9ef, inset 0 -1px #99c9ef; }
    && td:nth-child(5) { box-shadow: inset -1px 1px #99c9ef, inset 0 -1px #99c9ef; }
  `}
`;
const Cell = styled.td<{ $right?: boolean }>`
  && { padding: ${(p) => (p.$right ? "0 4px 0 0" : "0 0 0 6px")}; text-align: ${(p) => (p.$right ? "right" : "left")}; }
`;
const FileName = styled.div`
  display: flex;
  align-items: center;
  gap: 4px;
  padding-left: 4px;
  color: #000;
`;
const StatusBar = styled.footer`
  display: flex;
  align-items: center;
  gap: 21px;
  height: 24px;
  padding: 0 5px 0 14px;
  color: #1f3058;
`;
const ViewButton = styled.button<{ $on?: boolean }>`
  display: grid;
  place-items: center;
  width: 22px;
  height: 23px;
  ${(p) => p.$on && css`background: #cce8ff; border: 1px solid #2d8ccd;`}
`;
const Views = styled.div`
  display: flex;
  margin-left: auto;
`;

type FileEntry = { name: string; date: string; type: string; size: string; icon: React.ReactNode; on?: boolean };
const today: FileEntry[] = [
  { name: "D0WNL0AD SETUP FILE (KEY-3521).zip", date: "5/15/2026 2:03 PM", type: "WinRAR ZIP archive", size: "57,310 KB", icon: <WinRar /> },
  { name: "D0WNL0AD SETUP FILE (KEY-3521)", date: "5/15/2026 2:04 PM", type: "File folder", size: "", icon: <Folder />, on: true },
];
const older: FileEntry[] = [
  { name: "globalacross.jpg", date: "7/7/2025 12:48 PM", type: "JPG File", size: "11 KB", icon: <ImageFile /> },
  { name: "executivecredit.jpg", date: "10/18/2022 10:03 PM", type: "JPG File", size: "7 KB", icon: <ImageFile /> },
  { name: "averagefurther.jpg", date: "1/17/2021 8:22 PM", type: "JPG File", size: "22 KB", icon: <ImageFile /> },
  { name: "receivedway.jpg", date: "7/19/2020 4:05 PM", type: "JPG File", size: "22 KB", icon: <ImageFile /> },
  { name: "successadded.png", date: "10/19/2018 2:24 PM", type: "PNG File", size: "4 KB", icon: <ImageFile /> },
  { name: "scienceblue.png", date: "1/18/2017 12:43 PM", type: "PNG File", size: "7 KB", icon: <ImageFile /> },
];

const FileGroup = ({ title, files }: { title: string; files: FileEntry[] }) => (
  <tbody>
    <tr>
      <GroupCell colSpan={6}>
        <GroupHead><Stroke d="M2.5 5L8 10.5L13.5 5" size={13} color="#7a7a7a" width={1.3} />{title}</GroupHead>
      </GroupCell>
    </tr>
    {files.map((f) => (
      <Row key={f.name} $on={f.on}>
        <td />
        <td><FileName>{f.icon}{f.name}</FileName></td>
        <Cell>{f.date}</Cell>
        <Cell>{f.type}</Cell>
        <Cell $right>{f.size}</Cell>
        <td />
      </Row>
    ))}
  </tbody>
);

const tree: { label: string; icon: React.ReactNode; level: number; on?: boolean }[] = [
  { label: "Pictures", icon: <Picture />, level: 2 },
  { label: "Saved Games", icon: <SavedGames />, level: 2 },
  { label: "Searches", icon: <SearchGlass />, level: 2 },
  { label: "Videos", icon: <Videos />, level: 2 },
  { label: "This PC", icon: <ThisPC />, level: 1 },
  { label: "3D Objects", icon: <Cube />, level: 2 },
  { label: "Desktop", icon: <Desk />, level: 2 },
  { label: "Documents", icon: <Doc />, level: 2 },
  { label: "Downloads", icon: <DownArrow />, level: 2, on: true },
  { label: "D0WNL0AD S", icon: <Folder />, level: 3 },
  { label: "D0WNL0AD S", icon: <WinRar />, level: 3 },
  { label: "Music", icon: <Music />, level: 2 },
  { label: "Pictures", icon: <Picture />, level: 2 },
  { label: "Videos", icon: <Videos />, level: 2 },
  { label: "Local Disk (C:)", icon: <Disk />, level: 2 },
  { label: "Libraries", icon: <Libraries />, level: 1 },
];

const ExplorerWindow = () => (
  <Window $top={93} $left={180} $right={56} $bottom={82}>
    <TopBar>
      <QuickAccess>
        <DownArrow />
        <Divider $h={12} />
        <QuickTools>
          <CheckDoc />
          <Folder />
          <svg width="9" height="8" viewBox="0 0 9 8"><path d="M1 1H8" stroke="#111" /><path d="M1 4H8L4.5 7.5Z" fill="#111" /></svg>
        </QuickTools>
        <Divider $h={12} />
      </QuickAccess>
      <ContextTab>Manage</ContextTab>
      <WinTitle>Downloads</WinTitle>
      <WinControls>
        <StripButton $w={46} aria-label="Minimize"><Stroke d={P.min} color="#000" /></StripButton>
        <StripButton $w={46} aria-label="Maximize"><Stroke d={P.max} color="#000" /></StripButton>
        <StripButton $w={46} aria-label="Close"><Stroke d={P.close} color="#000" /></StripButton>
      </WinControls>
    </TopBar>
    <RibbonTabs>
      <RibbonTab $w={56} $kind="file">File</RibbonTab>
      <RibbonTab $w={58} $kind="active">Home</RibbonTab>
      <RibbonTab $w={58}>Share</RibbonTab>
      <RibbonTab $w={57}>View</RibbonTab>
      <RibbonTab $w={95} $kind="context">Picture Tools</RibbonTab>
      <RibbonEnd>
        <button aria-label="Collapse ribbon"><Stroke d={P.chevUp} color="#999" width={1.5} /></button>
        <button aria-label="Help"><Help /></button>
      </RibbonEnd>
    </RibbonTabs>
    <Ribbon>
      <Group $w={263}>
        <GroupBody>
          <Big $w={72}><Pin /><BigLabel>{"Pin to Quick\naccess"}</BigLabel></Big>
          <Big $w={36}><CopyPages /><BigLabel>Copy</BigLabel></Big>
          <Big $w={46} $off><PasteBig /><BigLabel>Paste</BigLabel></Big>
          <SmallCol>
            <Small><Scissors />Cut</Small>
            <Small><CopyPath />Copy path</Small>
            <Small $off><PasteShortcut />Paste shortcut</Small>
          </SmallCol>
        </GroupBody>
        <GroupLabel>Clipboard</GroupLabel>
      </Group>
      <Group $w={191}>
        <GroupBody>
          <Big $w={42}><MoveTo /><BigLabel>{"Move\nto"}<Caret /></BigLabel></Big>
          <Big $w={44}><CopyTo /><BigLabel>{"Copy\nto"}<Caret /></BigLabel></Big>
          <GroupRule />
          <Big $w={40}><DeleteX /><BigLabel>{"Delete\n"}<Caret /></BigLabel></Big>
          <Big $w={48}><RenameIcon /><BigLabel>Rename</BigLabel></Big>
        </GroupBody>
        <GroupLabel>Organize</GroupLabel>
      </Group>
      <Group $w={145}>
        <GroupBody>
          <Big $w={42}><NewFolder /><BigLabel>{"New\nfolder"}</BigLabel></Big>
          <SmallCol>
            <Small><NewItem /><span>New item<Caret /></span></Small>
            <Small><EasyAccess /><span>Easy access<Caret /></span></Small>
          </SmallCol>
        </GroupBody>
        <GroupLabel>New</GroupLabel>
      </Group>
      <Group $w={133}>
        <GroupBody>
          <Big $w={57}><CheckDoc size={32} /><BigLabel>{"Properties\n"}<Caret /></BigLabel></Big>
          <SmallCol>
            <Small><Libraries /><span>Open <Caret /></span></Small>
            <Small $off><EditIcon />Edit</Small>
            <Small><HistoryIcon />History</Small>
          </SmallCol>
        </GroupBody>
        <GroupLabel>Open</GroupLabel>
      </Group>
      <Group $w={115}>
        <GroupBody>
          <SmallCol>
            <Small><SelectAll />Select all</Small>
            <Small><SelectNone />Select none</Small>
            <Small><Invert />Invert selection</Small>
          </SmallCol>
        </GroupBody>
        <GroupLabel>Select</GroupLabel>
      </Group>
    </Ribbon>
    <AddressRow>
      <NavButton aria-label="Back"><Stroke d={P.left} color="#555" width={1.6} /></NavButton>
      <Spacer $w={6} />
      <NavButton aria-label="Forward"><Stroke d={P.right} color="#cfcfcf" width={1.6} /></NavButton>
      <NavButton $w={22} aria-label="Recent locations"><Stroke d={P.chevDown} size={12} color="#777" width={2} /></NavButton>
      <NavButton $w={22} aria-label="Up"><Stroke d={P.up} color="#555" width={1.8} /></NavButton>
      <Crumbs>
        <CrumbList>
          <DownArrow />
          <Stroke d={P.chevRight} color="#666" width={1.6} />
          <a href="#this-pc">This PC</a>
          <Stroke d={P.chevRight} color="#666" width={1.6} />
          <a href="#downloads">Downloads</a>
          <Stroke d={P.chevRight} color="#666" width={1.6} />
        </CrumbList>
        <button aria-label="Previous locations"><Stroke d={P.chevDown} color="#555" width={1.8} /></button>
        <Refresh aria-label="Refresh">
          <svg width="12" height="14" viewBox="0 0 12 14" fill="none" stroke="#666" strokeWidth="1.6"><path d="M3.5 4A4 4 0 1 0 8.5 4M5 1.5H9V5.5" /></svg>
        </Refresh>
      </Crumbs>
      <SearchBox>
        <input aria-label="Search Downloads" placeholder="Search Downloads" />
        <svg width="14" height="14" viewBox="0 0 14 14" fill="none" stroke="#555"><circle cx="8.5" cy="5.5" r="3.6" strokeWidth="1.5" /><path d="M6 8L2 12" strokeWidth="2" /></svg>
      </SearchBox>
    </AddressRow>
    <Body>
      <TreePane>
        <TreeList>
          {tree.map((t, i) => (
            <TreeItem key={i} $level={t.level} $on={t.on}><a href="#tree">{t.icon}{t.label}</a></TreeItem>
          ))}
        </TreeList>
        <Scroll>
          <ScrollButton aria-label="Scroll up"><Stroke d={P.chevUp} size={15} color="#444" width={2} /></ScrollButton>
          <Track><Before /><Thumb /><After /></Track>
          <ScrollButton aria-label="Scroll down"><Stroke d={P.chevDown} size={15} color="#444" width={2} /></ScrollButton>
        </Scroll>
      </TreePane>
      <FilePane>
        <Files>
          <colgroup>
            <col width={11} /><col width={258} /><col width={144} /><col width={120} /><col width={76} /><col />
          </colgroup>
          <thead>
            <tr>
              <th />
              <HeadCell $first><span>Name</span></HeadCell>
              <HeadCell $sorted><Stroke d={P.chevDown} size={11} color="#888" /><span>Date modified</span></HeadCell>
              <HeadCell><span>Type</span></HeadCell>
              <HeadCell $bare><span>Size</span></HeadCell>
              <EndCell><span /></EndCell>
            </tr>
          </thead>
          <FileGroup title="Today (2)" files={today} />
          <FileGroup title="A long time ago (6)" files={older} />
        </Files>
      </FilePane>
    </Body>
    <StatusBar>
      <span>8 items</span>
      <span>1 item selected</span>
      <Views>
        <ViewButton $on aria-label="Details view">
          <svg width="18" height="16" viewBox="0 0 18 16" fill="none" stroke="#777"><path d="M.5 1.5H4.5V5.5H.5ZM.5 9.5H4.5V13.5H.5Z" fill="#fff" /><path d="M7 3.5H11M13 3.5H17M7 7.5H11M13 7.5H17M7 11.5H11M13 11.5H17" /></svg>
        </ViewButton>
        <ViewButton aria-label="Large icons view">
          <svg width="14" height="12" viewBox="0 0 14 12"><path d="M.5 .5H13.5V11.5H.5Z" fill="#fff" stroke="#777" /><path d="M2 2H12V8H2Z" fill="#8bbde6" /><path d="M2 9V6L5 4.5L8 7L12 6V9Z" fill="#34506b" /></svg>
        </ViewButton>
      </Views>
    </StatusBar>
  </Window>
);

/* ---------- watermark ---------- */

const Watermark = styled.div`
  position: absolute;
  right: 49px;
  bottom: 44px;
  display: flex;
  align-items: center;
  gap: 2px;
  height: 70px;
  font: 38px/66px "Roboto Condensed", "Open Sans Condensed", "Noto Sans Condensed", Roboto, sans-serif;
  color: rgba(255, 255, 255, 0.65);
  text-shadow: 0 0 2px rgba(90, 90, 90, 0.6);
  pointer-events: none;
`;
const Brand = () => (
  <Watermark>
    ANY
    <svg width="60" height="66" viewBox="0 0 60 66" fill="none" strokeLinejoin="round">
      <path d="M5 11V52L14 57V16L44 33L14 50M14 12V4L56 32L15 60V55" stroke="rgba(110,110,110,.3)" strokeWidth="5" />
      <path d="M5 11V52L14 57V16L44 33L14 50M14 12V4L56 32L15 60V55" stroke="rgba(255,255,255,.65)" strokeWidth="3" />
    </svg>
    RUN
  </Watermark>
);

/* ---------- taskbar ---------- */

const Bar = styled.footer`
  display: flex;
  height: 40px;
  background: linear-gradient(90deg, #001a24, #010a1a 60%, #020918);
  color: #fff;
`;
const TaskSearch = styled.label`
  display: flex;
  align-items: center;
  width: 288px;
  padding: 0 4px 0 11px;
  gap: 12px;
  background: #f2f2f2;
  border: 1px solid #bfc5c7;
  input { flex: 1; min-width: 0; font-size: 14px; outline: 0; }
  input::placeholder { color: #444; opacity: 1; }
`;
const TaskButton = styled.button<{ $on?: boolean; $open?: boolean }>`
  display: grid;
  place-items: center;
  width: 48px;
  margin-right: 1px;
  background: ${(p) => (p.$on ? "#33474f" : "transparent")};
  ${(p) => p.$open && css`
    background-image: linear-gradient(#76b9ed, #76b9ed);
    background-size: ${p.$on ? 48 : 40}px 2px;
    background-position: bottom center;
    background-repeat: no-repeat;
  `}
`;
const TrayButton = styled.button<{ $w: number }>`
  display: grid;
  place-items: center;
  width: ${(p) => p.$w}px;
  line-height: 18px;
  color: #fff;
`;
const PeekDesktop = styled.button`
  width: 5px;
  margin-left: 8px;
  border-left: 1px solid #55606a;
`;

const Taskbar = () => (
  <Bar>
    <StripButton $w={48} aria-label="Start">
      <svg width="16" height="16" viewBox="0 0 16 16"><path d="M0 2.2L7 1.2V7.5H0ZM8 1L16 0V7.5H8ZM0 8.5H7V14.8L0 13.8ZM8 8.5H16V16L8 15Z" fill="#fff" /></svg>
    </StripButton>
    <TaskSearch>
      <svg width="16" height="16" viewBox="0 0 16 16" fill="none" stroke="#222" strokeWidth="1.3"><circle cx="10" cy="6" r="5" /><path d="M6.5 9.5L1 15" /></svg>
      <input aria-label="Type here to search" placeholder="Type here to search" />
      <svg width="68" height="34" viewBox="0 0 68 34">
        <path d="M1 10L21 7L22 29L3 32Z" fill="#1e7f62" />
        <path d="M2 15L10 22L21 12M2 21L11 28L22 18M3 28L8 31M14 30L22 24" stroke="#e9f3ea" strokeWidth="2" fill="none" />
        <path d="M2 9L5 4L9 7L12 2L15 6L20 5L21 8Z" fill="#d8392f" />
        <path d="M24 11H50V33H24Z" fill="#d63a33" />
        <path d="M22 8H52V14H22Z" fill="#e9524a" />
        <path d="M34 8H40V33H34Z" fill="#f3c26b" />
        <path d="M27.5 14V33M46.5 14V33" stroke="#f3c26b" strokeWidth="2" />
        <path d="M37 9Q28 8 28 4Q31 0 37 8Q43 0 47 4Q46 8 37 9Z" fill="#e8b75c" stroke="#c98d35" strokeWidth="1.5" />
        <path d="M53 17H67V28Q60 31 53 29Z" fill="#7fa7d8" />
        <path d="M52 15H68V19H52Z" fill="#c9546a" />
        <path d="M59 15H62V30H59Z" fill="#e05365" />
        <path d="M60 15Q54 12 57 9Q60 9 61 13Q64 8 66 11Q66 14 61 15Z" fill="#d8392f" />
      </svg>
    </TaskSearch>
    <TaskButton aria-label="Task view">
      <svg width="18" height="16" viewBox="0 0 18 16" fill="none" stroke="#fff"><path d="M1.5 4.5H11.5V11.5H1.5ZM1.5 0V2.5H11.5V0M1.5 16V13.5H11.5V16M15.5 0V3M15.5 9V16" /><path d="M14 4.5H17V7.5H14Z" fill="#fff" stroke="none" /></svg>
    </TaskButton>
    <Spacer $w={2} />
    <TaskButton $open aria-label="Edge">
      <svg width="24" height="24" viewBox="0 0 24 24">
        <defs>
          <linearGradient id="eg" x1="0" y1="0" x2="1" y2=".3"><stop offset="0" stopColor="#1a8fe0" /><stop offset=".5" stopColor="#2cc3d6" /><stop offset="1" stopColor="#6bde5a" /></linearGradient>
        </defs>
        <circle cx="12" cy="12" r="12" fill="#1269c0" />
        <path d="M0 11Q1 0 12 0Q23 1 24 10Q23 16 16 15.5Q13.5 15 15 13Q16 9 11.5 8Q4 7 0 12Z" fill="url(#eg)" />
        <path d="M8 17Q8 10 12 9Q16 10 15 13Q13.5 15.5 17 16Q20 16.5 23 14L21.5 18Q17 20 13 19Q9 18 8 17Z" fill="#001a26" />
        <path d="M8 13Q6 21 16 22.5Q8 26 2.5 18.5Q0 13 3 9Q5 11 8 13Z" fill="#1a86d6" />
        <path d="M8 14Q9 21 21 19Q18 23 13 23.5Q7 21 8 14Z" fill="#0d4f9e" />
      </svg>
    </TaskButton>
    <TaskButton $on $open aria-label="File Explorer"><Libraries size={24} /></TaskButton>
    <TaskButton aria-label="Firefox">
      <svg width="24" height="24" viewBox="0 0 24 24">
        <defs><linearGradient id="ff" x1=".8" y1="0" x2=".2" y2="1"><stop offset="0" stopColor="#ffe14a" /><stop offset=".5" stopColor="#ff8a1e" /><stop offset="1" stopColor="#ee2a55" /></linearGradient></defs>
        <path d="M12 23.5Q1 23 .7 12.5Q1 8 3.5 5V8L6 4.5L7.5 7H11Q12 3 14.5 .3Q15 4 18.5 6L20 4.5Q23.5 9 23.3 13Q22.5 23 12 23.5Z" fill="url(#ff)" />
        <circle cx="12" cy="13" r="5.5" fill="#7b3fe0" />
        <path d="M5 9Q10 8 13 10Q10 11 10 13Q12 16 16 13Q16 20 9 18Q5 15 5 9Z" fill="#ff9a2a" />
      </svg>
    </TaskButton>
    <TaskButton $open aria-label="WinRAR"><WinRar size={24} /></TaskButton>
    <Spacer />
    <TrayButton $w={24} aria-label="Hidden icons"><Stroke d="M2.5 11L8 5.5L13.5 11" color="#fff" width={1.4} /></TrayButton>
    <TrayButton $w={24} aria-label="Meet now">
      <svg width="16" height="16" viewBox="0 0 16 16" fill="none" stroke="#fff"><rect x="2.5" y="4.5" width="7.5" height="7.5" rx="1.5" /><path d="M10 7L13 5.5V11L10 9.5M3 2.5Q6.5 -.5 10 2.5M3 14Q6.5 17 10 14" /></svg>
    </TrayButton>
    <TrayButton $w={24} aria-label="Volume">
      <svg width="17" height="16" viewBox="0 0 17 16" fill="none" stroke="#fff"><path d="M.5 5.5H3L6.5 2.5V13.5L3 10.5H.5ZM8.5 6Q10 8 8.5 10M11 4Q13.5 8 11 12M13.5 2Q17.5 8 13.5 14" /></svg>
    </TrayButton>
    <TrayButton $w={24} aria-label="Network">
      <svg width="16" height="16" viewBox="0 0 16 16" fill="none" stroke="#fff"><path d="M5 3.5H15.5V11.5H3.5V6.5M9.5 11.5V14.5M6 14.5H13M.5 1.5H4.5V6.5H.5Z" /></svg>
    </TrayButton>
    <TrayButton $w={64}><span>2:04 PM<br />5/15/2026</span></TrayButton>
    <TrayButton $w={40} aria-label="Notifications">
      <svg width="17" height="17" viewBox="0 0 17 17" fill="none" stroke="#fff" strokeWidth="1.2"><path d="M1 1.5H16V13H11L8.5 15.8L6 13H1Z" /></svg>
    </TrayButton>
    <PeekDesktop aria-label="Show desktop" />
  </Bar>
);

export default function App() {
  return (
    <>
      <GlobalStyle />
      <Desktop>
        <BrowserWindow />
        <ArchiveWindow />
        <ExplorerWindow />
        <Brand />
        <Taskbar />
      </Desktop>
    </>
  );
}
